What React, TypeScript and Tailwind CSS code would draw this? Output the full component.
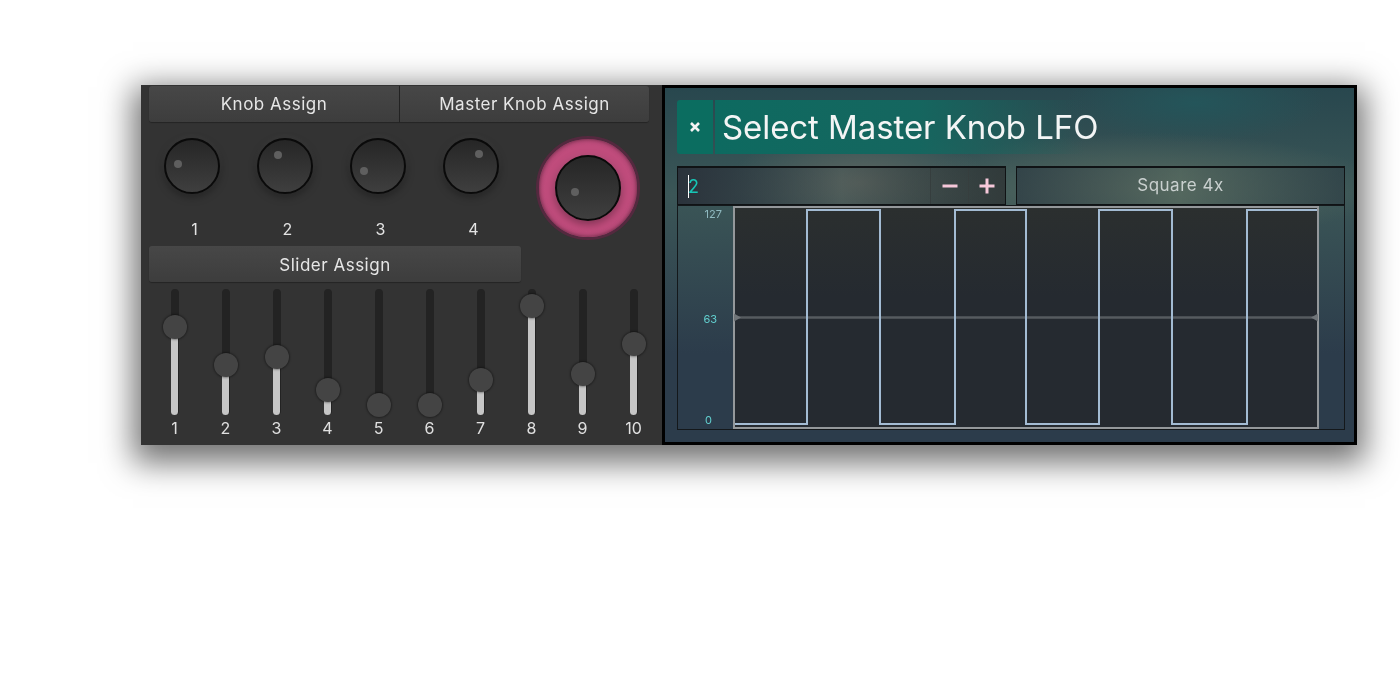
import React from "react";

const font = { fontFamily: '"Inter", "Liberation Sans", sans-serif' };

// thumb centre, measured from the top of the 126px track
const sliders = [38, 76, 68, 101, 116, 116, 91, 17, 85, 55];

function Knob({ dotX, dotY, size = 56 }: { dotX: number; dotY: number; size?: number }) {
  return (
    <div
      className="relative rounded-full border-2 border-[#0a0a0a] bg-gradient-to-b from-[#262626] to-[#3f3f3f] shadow-[0_3px_8px_rgba(0,0,0,0.35),0_-1px_6px_rgba(255,255,255,0.06)]"
      style={{ width: size, height: size }}
    >
      <div
        className="absolute h-2 w-2 rounded-full bg-[#5f5f5f] blur-[0.5px]"
        style={{ left: dotX, top: dotY }}
      />
    </div>
  );
}

function SmallKnob({ label, dotX, dotY }: { label: string; dotX: number; dotY: number }) {
  return (
    <div className="flex w-[93px] flex-col items-center">
      <Knob dotX={dotX} dotY={dotY} />
      <div className="ml-[6px] mt-[24px] text-[16px] leading-[22px] text-[#e4e4e4]">{label}</div>
    </div>
  );
}

function Slider({ pos, label }: { pos: number; label: string }) {
  return (
    <div className="flex w-[51px] flex-col items-center">
      <div className="relative h-[126px] w-2 rounded-full bg-[#232323]">
        <div
          className="absolute inset-x-[0.5px] bottom-0 rounded-b-full bg-[#c6c6c6]"
          style={{ height: 126 - pos }}
        />
        <div
          className="absolute left-[-8px] h-6 w-6 rounded-full bg-[#444444] shadow-[0_0_2px_1px_rgba(0,0,0,0.35)]"
          style={{ top: pos - 12 }}
        />
      </div>
      <div className="mt-[2px] text-[16px] leading-[22px] text-[#e0e0e0]">{label}</div>
    </div>
  );
}

function AssignButton({ children, className }: { children: React.ReactNode; className: string }) {
  return (
    <div
      className={`flex h-[36px] items-center justify-center bg-gradient-to-b from-[#474747] to-[#3d3d3d] text-[17px] tracking-[0.5px] text-[#e6e6e6] shadow-[0_1px_1px_rgba(0,0,0,0.3)] ${className}`}
    >
      {children}
    </div>
  );
}

function Wave() {
  return (
    <svg className="absolute inset-0 h-full w-full overflow-visible" viewBox="0 0 582 219" fill="none">
      <path d="M0 109.5H582" stroke="#565b5f" strokeWidth="2.5" />
      <path d="M-1 105.5L6 109.5L-1 113.5Z" fill="#6f7478" />
      <path d="M583 105.5L576 109.5L583 113.5Z" fill="#6f7478" />
      <path
        d="M0 216H72V2H145V216H220V2H291V216H364V2H437V216H512V2H582"
        stroke="#a3bbd3"
        strokeWidth="2"
      />
    </svg>
  );
}

export default function App() {
  return (
    <div className="h-[700px] w-[1400px] overflow-hidden bg-white pl-[141px] pt-[85px]" style={font}>
      <div className="flex h-[360px] w-[1216px] shadow-[0_10px_30px_8px_rgba(0,0,0,0.55)] blur-[0.3px]">
        {/* Assign panel */}
        <div className="flex w-[521px] flex-col bg-[#333333] pl-2 pt-px">
          <div className="flex w-[500px]">
            <AssignButton className="w-[251px] rounded-l-[3px] border-r border-[#232323] pt-[2px]">Knob Assign</AssignButton>
            <AssignButton className="w-[249px] rounded-r-[3px] pt-[2px]">Master Knob Assign</AssignButton>
          </div>

          <div className="flex">
            <div className="flex w-[372px] flex-col">
              <div className="-ml-1 mt-[16px] flex">
                <SmallKnob label="1" dotX={8} dotY={20} />
                <SmallKnob label="2" dotX={15} dotY={11} />
                <SmallKnob label="3" dotX={8} dotY={27} />
                <SmallKnob label="4" dotX={30} dotY={10} />
              </div>
              <AssignButton className="mt-[6px] rounded-[3px] pt-[3px]">Slider Assign</AssignButton>
            </div>
            <div className="ml-[15px] mt-[14px] flex h-[104px] w-[104px] items-center justify-center rounded-full border-[3px] border-[#54293f] bg-[radial-gradient(circle,#c04c7c_60%,#a64470_100%)] shadow-[inset_0_0_4px_rgba(0,0,0,0.5)] blur-[0.3px]">
              <Knob dotX={14} dotY={31} size={66} />
            </div>
          </div>

          <div className="mt-[7px] flex">
            {sliders.map((pos, i) => (
              <Slider key={i} pos={pos} label={String(i + 1)} />
            ))}
          </div>
        </div>

        {/* LFO panel */}
        <div className="flex w-[695px] flex-col border-[3px] border-black bg-[#2c3c4b] bg-[radial-gradient(ellipse_130px_55px_at_195px_95px,#5c6661_0%,transparent_100%),radial-gradient(ellipse_240px_55px_at_480px_100px,#56695f_0%,transparent_100%),radial-gradient(ellipse_130px_40px_at_530px_15px,#24555a_0%,transparent_100%),linear-gradient(180deg,#28474e_0%,#3b5657_30%,#2c3c4b_75%)] pl-3 pr-[9px] pt-3">
          <div className="flex h-[54px] gap-[2px]">
            <div className="flex w-[36px] items-center justify-center rounded-l-[3px] bg-[#0b6d60] text-[#f4f4f4]">
              <svg width="12" height="12" viewBox="0 0 12 12">
                <path d="M2 2L10 10M10 2L2 10" stroke="currentColor" strokeWidth="2.6" />
              </svg>
            </div>
            <div className="flex w-[370px] items-center bg-gradient-to-r from-[#0d6a60] via-[#15665f] via-55% to-transparent pl-[7px] pt-[2px] text-[33px] tracking-[-0.08px] text-[#f3f5f5]">
              <span className="whitespace-nowrap">Select Master Knob LFO</span>
            </div>
          </div>

          <div className="mt-3 flex h-[39px] gap-[10px]">
            <div className="flex w-[329px] items-center border border-t-2 border-[#101315] bg-gradient-to-r from-[#2a313a]/95 via-[#3f4a4a]/25 to-[#2d3233]/80 pl-[10px]">
              <div className="h-[23px] w-px bg-white" />
              <span className="-ml-px text-[18px] text-[#17c6b6]">2</span>
              <div className="ml-auto flex h-full">
                <div className="flex w-[38px] items-center justify-center border-l border-[#363e3e] text-[#f6c8da]">
                  <svg width="16" height="16" viewBox="0 0 16 16">
                    <path d="M0.5 8H15.5" stroke="currentColor" strokeWidth="3" />
                  </svg>
                </div>
                <div className="flex w-[37px] items-center justify-center border-l border-[#363e3e] text-[#f6c8da]">
                  <svg width="16" height="16" viewBox="0 0 16 16">
                    <path d="M0.5 8H15.5M8 0.5V15.5" stroke="currentColor" strokeWidth="3" />
                  </svg>
                </div>
              </div>
            </div>
            <div className="flex w-[329px] items-center justify-center border border-t-2 border-[#101315] bg-gradient-to-r from-[#2c3a42]/70 via-[#56695f]/50 to-[#2e3f45]/70 text-[17px] tracking-[0.5px] text-[#c9d0cf]">
              Square 4x
            </div>
          </div>

          <div className="flex h-[225px] w-[668px] border border-[#14181b]">
            <div className="flex w-[55px] flex-col items-end justify-between pb-[2px] pr-[11px] text-[11px] leading-[14px] text-[#62cfcf]">
              <span className="mt-px text-[#8fb9c0]">127</span>
              <span className="mr-[5px] mt-[3px]">63</span>
              <span className="mr-[10px]">0</span>
            </div>
            <div className="relative h-[223px] w-[586px] border-2 border-[#94989b] bg-gradient-to-b from-[#2b2f2f] to-[#252a30] to-40%">
              <Wave />
            </div>
          </div>
        </div>
      </div>
    </div>
  );
}
